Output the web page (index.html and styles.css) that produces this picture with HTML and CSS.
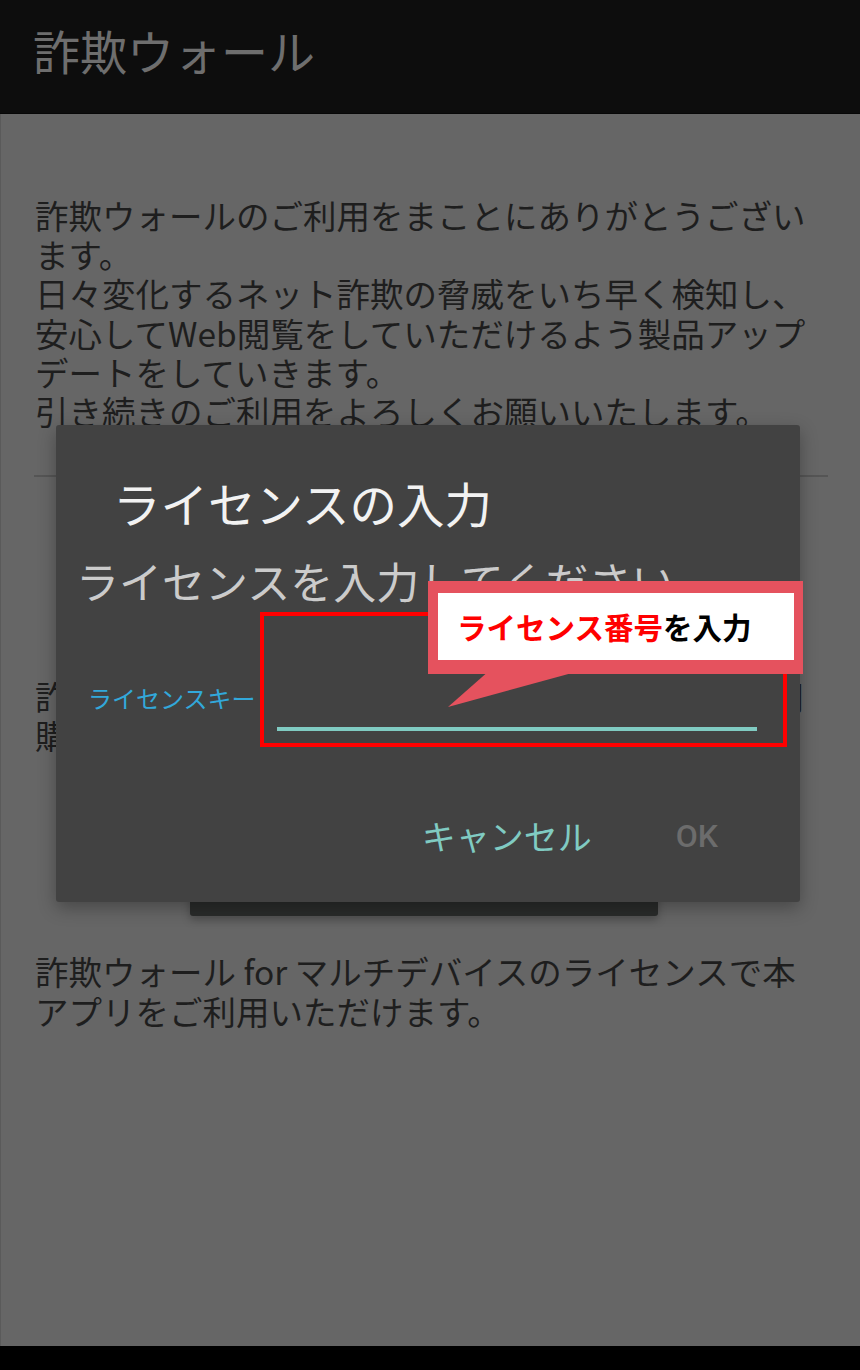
FILE: index.html
```html
<!DOCTYPE html>
<html lang="ja">
<head>
  <meta charset="UTF-8" />
  <meta name="viewport" content="width=device-width, initial-scale=1" />
  <title>詐欺ウォール - ライセンスの入力</title>
  <link rel="stylesheet" href="styles.css">
</head>
<body>

  <div class="screen">
    <div class="appbar">詐欺ウォール</div>

    <div class="content">
      <p class="intro">詐欺ウォールのご利用をまことにありがとうござい<br>ます。<br>日々変化するネット詐欺の脅威をいち早く検知し、<br>安心してWeb閲覧をしていただけるよう製品アップ<br>デートをしていきます。<br>引き続きのご利用をよろしくお願いいたします。</p>
      <hr class="divider" />
      <p class="note">詐欺ウォールのライセンスをお持ちでない方は利用<br>購入ページからお申し込みください。</p>
      <div class="page-btn"></div>
      <p class="footnote">詐欺ウォール for マルチデバイスのライセンスで本<br>アプリをご利用いただけます。</p>
    </div>

    <div class="navbar"></div>

    <!-- license dialog -->
    <div class="dialog">
      <div class="dlg-title">ライセンスの入力</div>
      <div class="dlg-msg">ライセンスを入力してください</div>
      <div class="field">
        <span class="field-label">ライセンスキー</span>
        <span class="field-input"></span>
      </div>
      <div class="dlg-actions">
        <span class="btn-cancel">キャンセル</span>
        <span class="btn-ok">OK</span>
      </div>
    </div>

    <!-- annotation -->
    <div class="mark-box"></div>
    <svg class="callout-tail" width="150" height="44" viewBox="0 0 150 44">
      <polygon points="50,0 143,0 8,37" fill="#e5525e" />
    </svg>
    <div class="callout">
      <div class="callout-inner"><span class="hl">ライセンス番号</span>を入力</div>
    </div>
  </div>

</body>
</html>
```

FILE: styles.css
```css
body {
  margin: 0;
  background: #000;
  font-family: "Noto Sans CJK JP", "Noto Sans", sans-serif;
}

.screen {
  position: relative;
  width: 860px;
  height: 1370px;
  display: flex;
  flex-direction: column;
  overflow: hidden;
}

.appbar {
  height: 114px;
  flex: none;
  background: #0d0d0d;
  color: #6e6e6e;
  font-size: 47px;
  line-height: 100px;
  padding-left: 33px;
  box-sizing: border-box;
  border-bottom: 1px solid #070707;
}

.content {
  flex: 1;
  background: #666;
  border-left: 1px solid #5a5a5a;
  padding: 0 34px;
  color: #1e1e1e;
  font-size: 33.5px;
  line-height: 39.2px;
  white-space: nowrap;
}

.intro {
  margin: 81px 0 0;
}

.divider {
  margin: 45px -2px 0 -1px;
  border: none;
  height: 2px;
  background: #555;
}

.note {
  margin: 199px 0 0;
}

.page-btn {
  margin: 101px 0 0 155px;
  width: 468px;
  height: 60px;
  background: #2a2c2b;
  border-radius: 3px;
  box-shadow: 0 4px 8px rgba(0, 0, 0, 0.25);
}

.footnote {
  margin: 35px 0 0;
  line-height: 40px;
}

.navbar {
  height: 24px;
  flex: none;
  background: #000;
}

.dialog {
  position: absolute;
  left: 56px;
  top: 425px;
  width: 744px;
  height: 477px;
  background: #424242;
  border-radius: 3px;
  box-shadow: 0 6px 18px rgba(0, 0, 0, 0.3);
}

.dlg-title {
  margin: 50px 0 0 57px;
  font-size: 47.5px;
  line-height: 56px;
  color: #f2f2f2;
}

.dlg-msg {
  margin: 24px 0 0 20px;
  font-size: 43px;
  line-height: 50px;
  color: #cbcbcb;
  white-space: nowrap;
}

.field {
  display: flex;
  align-items: center;
  margin-top: 66px;
  height: 60px;
  padding-left: 32px;
  gap: 21px;
}

.field-label {
  font-size: 24px;
  color: #32a8da;
  margin-bottom: 8px;
}

.field-input {
  width: 480px;
  height: 60px;
  box-sizing: border-box;
  border-bottom: 4px solid #80cbc2;
}

.dlg-actions {
  display: flex;
  justify-content: flex-end;
  align-items: center;
  gap: 84px;
  margin-top: 85px;
  padding-right: 82px;
  line-height: 40px;
}

.btn-cancel {
  font-size: 34px;
  color: #80cbc2;
}

.btn-ok {
  font-family: Roboto, "Noto Sans CJK JP", sans-serif;
  font-weight: 500;
  font-size: 32px;
  color: #6c6c6c;
}

.mark-box {
  position: absolute;
  left: 260px;
  top: 612px;
  width: 527px;
  height: 135px;
  box-sizing: border-box;
  border: 4px solid #ff0000;
}

.callout-tail {
  position: absolute;
  left: 440px;
  top: 670px;
}

.callout {
  position: absolute;
  left: 428px;
  top: 581px;
  width: 375px;
  box-sizing: border-box;
  padding: 12px 9px 14px 10px;
  background: #e5525e;
}

.callout-inner {
  background: #fff;
  height: 67px;
  padding-left: 19px;
  font-size: 29.5px;
  font-weight: 700;
  line-height: 67px;
  color: #000;
  white-space: nowrap;
}

.hl {
  color: #ff0000;
}
```
